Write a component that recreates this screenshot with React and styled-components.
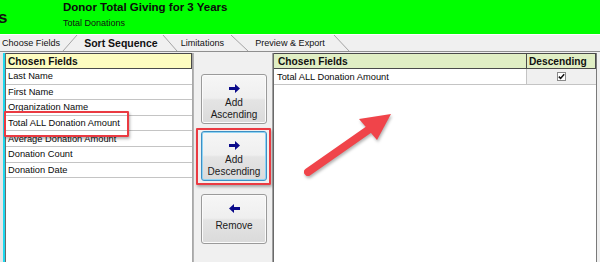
import React from 'react';
import styled, { createGlobalStyle } from 'styled-components';

const GlobalStyle = createGlobalStyle`
  html, body {
    margin: 0;
    padding: 0;
  }
  body {
    width: 600px;
    height: 262px;
    overflow: hidden;
    background: #f0f0f0;
    font-family: "Liberation Sans", Arial, sans-serif;
    color: #000;
  }
`;

const Screen = styled.div`
  position: relative;
  width: 600px;
  height: 262px;
  overflow: hidden;
  display: flex;
  flex-direction: column;
  background: #f0f0f0;
`;

// Title banner
const Banner = styled.header`
  height: 34px;
  flex-shrink: 0;
  display: flex;
  background: #00ff00;
`;

const CutWord = styled.div`
  width: 63px;
  overflow: hidden;
  font-weight: bold;
  font-size: 17px;
  line-height: 1;
  padding-top: 9px;
  text-indent: -2px;
  color: #111;
`;

const TitleBlock = styled.div`
  display: flex;
  flex-direction: column;
  padding-top: 2px;
`;

const Title = styled.div`
  font-weight: bold;
  font-size: 11.5px;
  line-height: 11.5px;
  color: #0b0b0b;
`;

const Subtitle = styled.div`
  font-size: 9px;
  line-height: 9px;
  margin-top: 5.5px;
  color: #111;
`;

// Tabs
const TabStrip = styled.nav`
  height: 18px;
  flex-shrink: 0;
  box-sizing: border-box;
  display: flex;
  align-items: stretch;
  padding-left: 2px;
  background: #f0f0f0;
  border-top: 1px solid #ffffff;
  border-bottom: 1px solid #8f8f8f;
  font-size: 9.1px;
  color: #111;
`;

const Tab = styled.div`
  display: flex;
  align-items: center;
  padding-left: ${p => p.$lead}px;
  font-weight: ${p => (p.$active ? 'bold' : 'normal')};
  font-size: ${p => (p.$active ? '10.5px' : 'inherit')};
  white-space: nowrap;
`;

const TabSep = styled.svg`
  display: block;
  flex-shrink: 0;
`;

// Work area
const Workspace = styled.main`
  flex: 1;
  min-height: 0;
  display: flex;
  padding-top: 1px;
`;

const EdgeStripe = styled.div`
  width: 3px;
  background: #e6e6e6;
  border-right: 2px solid #1ed8ee;
`;

const Grid = styled.section`
  width: ${p => p.$w}px;
  flex-shrink: 0;
  box-sizing: border-box;
  background: #ffffff;
  border-left: 1px solid #6a6a6a;
  border-right: 1px solid ${p => p.$edge || '#a8a8a8'};
  display: flex;
  flex-direction: column;
`;

const HeadRow = styled.div`
  display: flex;
  height: 16px;
  box-sizing: border-box;
  background: ${p => p.$tone};
  border: 1px solid #4a4a4a;
  border-left: none;
  font-weight: bold;
  font-size: 10.2px;
  color: #101010;
`;

const HeadCell = styled.div`
  display: flex;
  align-items: center;
  padding-left: ${p => p.$pad || 2}px;
  ${p => (p.$w ? `width: ${p.$w}px;` : 'flex: 1;')}
  border-left: ${p => (p.$divide ? '1px solid #4a4a4a' : 'none')};
  box-sizing: border-box;
`;

const Row = styled.div`
  display: flex;
  height: ${p => p.$h}px;
  box-sizing: border-box;
  border-bottom: 1px solid #c4c4c4;
  font-size: 9.3px;
  color: #0a0a0a;
`;

const Cell = styled.div`
  display: flex;
  align-items: center;
  ${p => (p.$center ? 'justify-content: center;' : '')}
  padding-left: ${p => p.$pad || 0}px;
  ${p => (p.$w ? `width: ${p.$w}px;` : 'flex: 1;')}
  background: ${p => p.$bg || 'transparent'};
  border-left: ${p => (p.$divide ? '1px solid #c4c4c4' : 'none')};
  box-sizing: border-box;
  white-space: nowrap;
  overflow: hidden;
`;

const CheckBox = styled.span`
  width: 9px;
  height: 9px;
  box-sizing: border-box;
  border: 1px solid #8a8a8a;
  background: #fff;
  display: flex;
  align-items: center;
  justify-content: center;
`;

const ButtonColumn = styled.div`
  width: 80px;
  flex-shrink: 0;
  box-sizing: border-box;
  border-left: 1px solid #b4b4b4;
  border-right: 1px solid #a0a0a0;
  padding: 21px 0 0 7px;
  display: flex;
  flex-direction: column;
`;

const ActionButton = styled.button`
  width: 66px;
  height: 50px;
  margin-top: ${p => p.$space}px;
  padding: 0;
  box-sizing: border-box;
  border: 1px solid ${p => (p.$focused ? '#3c8fc4' : '#9a9a9a')};
  border-radius: 3px;
  background: linear-gradient(#f6f6f6 0%, #efefef 48%, #e4e4e4 52%, #dadada 100%);
  box-shadow: ${p => (p.$focused ? 'inset 0 0 0 1px #8fd3f3' : 'inset 0 0 0 1px #fbfbfb')};
  display: flex;
  flex-direction: column;
  align-items: center;
  font-family: "Liberation Sans", Arial, sans-serif;
  font-size: 10px;
  line-height: 11.5px;
  color: #1a1a1a;
`;

const ArrowIcon = styled.svg`
  display: block;
  margin: 9px 0 4px;
`;

const Spacer = styled.div`
  height: ${p => p.$h}px;
`;

// Annotations drawn over the screenshot
const Highlight = styled.div`
  position: absolute;
  left: ${p => p.$x}px;
  top: ${p => p.$y}px;
  width: ${p => p.$w}px;
  height: ${p => p.$h}px;
  box-sizing: border-box;
  border: 2.5px solid #ea3a42;
  border-radius: 1px;
  box-shadow: 1px 2px 3px rgba(0, 0, 0, 0.3);
  pointer-events: none;
`;

const PointerArrow = styled.svg`
  position: absolute;
  left: 295px;
  top: 105px;
  filter: drop-shadow(1px 2px 1.5px rgba(0, 0, 0, 0.3));
`;

const tabs = [
  { label: 'Choose Fields', lead: 0, sep: [3, 16, 17, 0], sepW: 24 },
  { label: 'Sort Sequence', lead: 0, active: true, sep: [5, 0, 19, 16], sepW: 23 },
  { label: 'Limitations', lead: 0, sep: [7, 0, 24, 16], sepW: 31 },
  { label: 'Preview & Export', lead: 0, sep: [9, 0, 24, 16], sepW: 26 },
];

const chosen = [
  'Last Name',
  'First Name',
  'Organization Name',
  'Total ALL Donation Amount',
  'Average Donation Amount',
  'Donation Count',
  'Donation Date',
];

const RightArrow = () => (
  <ArrowIcon width="11" height="9" viewBox="0 0 11 9">
    <path d="M0 3 H6 V0 L11 4.5 L6 9 V6 H0 Z" fill="#0a0a8a" />
  </ArrowIcon>
);

const LeftArrow = () => (
  <ArrowIcon width="11" height="9" viewBox="0 0 11 9">
    <path d="M11 3 H5 V0 L0 4.5 L5 9 V6 H11 Z" fill="#0a0a8a" />
  </ArrowIcon>
);

const App = () => {
  return (
    <Screen>
      <GlobalStyle />
      <Banner>
        <CutWord>s</CutWord>
        <TitleBlock>
          <Title>Donor Total Giving for 3 Years</Title>
          <Subtitle>Total Donations</Subtitle>
        </TitleBlock>
      </Banner>

      <TabStrip>
        {tabs.map(t => (
          <React.Fragment key={t.label}>
            <Tab $lead={t.lead} $active={t.active}>{t.label}</Tab>
            <TabSep width={t.sepW} height="16" viewBox={`0 0 ${t.sepW} 16`}>
              <line x1={t.sep[0]} y1={t.sep[1]} x2={t.sep[2]} y2={t.sep[3]} stroke="#a3a3a3" strokeWidth="1" />
            </TabSep>
          </React.Fragment>
        ))}
      </TabStrip>

      <Workspace>
        <EdgeStripe />

        <Grid $w={188}>
          <HeadRow $tone="#fdfcc0">
            <HeadCell $pad={2}>Chosen Fields</HeadCell>
          </HeadRow>
          {chosen.map(name => (
            <Row key={name} $h={15.6}>
              <Cell $pad={2}>{name}</Cell>
            </Row>
          ))}
        </Grid>

        <ButtonColumn>
          <ActionButton $space={0}>
            <RightArrow />
            <span>Add</span>
            <span>Ascending</span>
          </ActionButton>
          <ActionButton $space={7} $focused>
            <RightArrow />
            <span>Add</span>
            <span>Descending</span>
          </ActionButton>
          <ActionButton $space={13}>
            <LeftArrow />
            <Spacer $h={3} />
            <span>Remove</span>
          </ActionButton>
        </ButtonColumn>

        <Grid $w={324} $edge="#7a7a7a">
          <HeadRow $tone="#e0eec4">
            <HeadCell $pad={4} $w={252}>Chosen Fields</HeadCell>
            <HeadCell $pad={2} $divide>Descending</HeadCell>
          </HeadRow>
          <Row $h={16}>
            <Cell $pad={3} $w={252}>Total ALL Donation Amount</Cell>
            <Cell $center $divide $bg="#f0f0f0">
              <CheckBox>
                <svg width="7" height="7" viewBox="0 0 7 7">
                  <path d="M0.8 3.6 L2.6 5.4 L6.2 1.2" fill="none" stroke="#111" strokeWidth="1.5" />
                </svg>
              </CheckBox>
            </Cell>
          </Row>
        </Grid>
      </Workspace>

      <Highlight $x={4} $y={111} $w={125} $h={26} />
      <Highlight $x={196} $y={128} $w={75} $h={57} />

      <PointerArrow width="110" height="80" viewBox="0 0 110 80">
        <line x1="13" y1="67" x2="76" y2="23" stroke="#f0444a" strokeWidth="8" strokeLinecap="round" />
        <polygon points="96,9 64,14 82,35" fill="#f0444a" />
      </PointerArrow>
    </Screen>
  );
};

export default App;
